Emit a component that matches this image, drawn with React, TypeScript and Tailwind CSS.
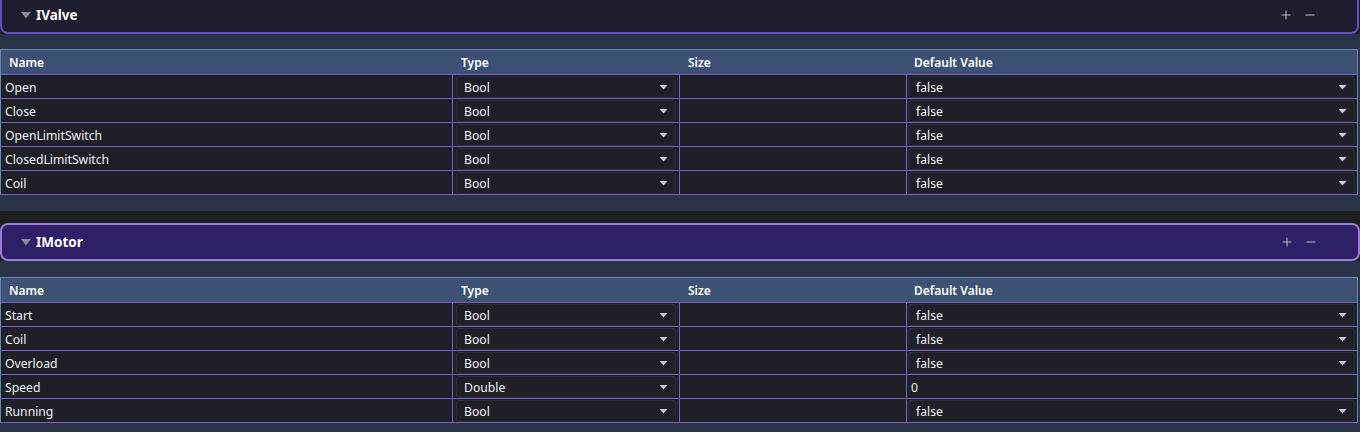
import { Minus, Plus } from "lucide-react";

type Row = { name: string; type: string; value: string; select: boolean };

const valveRows: Row[] = [
  { name: "Open", type: "Bool", value: "false", select: true },
  { name: "Close", type: "Bool", value: "false", select: true },
  { name: "OpenLimitSwitch", type: "Bool", value: "false", select: true },
  { name: "ClosedLimitSwitch", type: "Bool", value: "false", select: true },
  { name: "Coil", type: "Bool", value: "false", select: true },
];

const motorRows: Row[] = [
  { name: "Start", type: "Bool", value: "false", select: true },
  { name: "Coil", type: "Bool", value: "false", select: true },
  { name: "Overload", type: "Bool", value: "false", select: true },
  { name: "Speed", type: "Double", value: "0", select: false },
  { name: "Running", type: "Bool", value: "false", select: true },
];

function Caret() {
  return (
    <svg width="9" height="6" viewBox="0 0 9 6" className="shrink-0">
      <path d="M0.5 1h8L4.5 5.5z" fill="#c9c9cf" />
    </svg>
  );
}

function SelectBox({ value }: { value: string }) {
  return (
    <div className="flex h-full items-center justify-between rounded-[3px] border border-[#2b2c34] pl-[7px] pr-[7px]">
      <span className="pt-[2px]">{value}</span>
      <Caret />
    </div>
  );
}

function PropertyTable({ rows }: { rows: Row[] }) {
  return (
    <div className="mr-[2px] border-x border-t border-[#6289b4] text-[12.2px] text-[#eef0f6]">
      <div className="grid h-[25px] grid-cols-[452px_227px_227px_1fr] items-center border-b border-[#7a5cc6] bg-[#3c5174] pt-[2px] text-[12px] font-semibold text-white">
        <div className="pl-[8px]">Name</div>
        <div className="pl-[8px]">Type</div>
        <div className="pl-[8px]">Size</div>
        <div className="pl-[7px]">Default Value</div>
      </div>
      {rows.map((r, i) => (
        <div
          key={i}
          className="grid h-[24px] grid-cols-[452px_227px_227px_1fr] border-b border-[#7a5cc6] bg-[#1f2027]"
        >
          <div className="flex items-center border-r border-[#7a5cc6] pl-[4px] pt-[2px]">{r.name}</div>
          <div className="border-r border-[#7a5cc6] px-[3px] py-[1px]">
            <SelectBox value={r.type} />
          </div>
          <div className="border-r border-[#7a5cc6]" />
          {r.select ? (
            <div className="py-[1px] pl-[1px] pr-[2px]">
              <SelectBox value={r.value} />
            </div>
          ) : (
            <div className="flex items-center pl-[4px] pt-[2px]">{r.value}</div>
          )}
        </div>
      ))}
    </div>
  );
}

function HeaderControls() {
  return (
    <div className="flex items-center gap-[10px] pr-[40px] text-[#b8b8c4]">
      <Plus size={14} strokeWidth={1.8} />
      <Minus size={14} strokeWidth={1.8} />
    </div>
  );
}

function Title({ label }: { label: string }) {
  return (
    <div className="flex items-center gap-[5px] pl-[19px]">
      <svg width="10" height="7" viewBox="0 0 10 7">
        <path d="M0 0h10L5 6.5z" fill="#8a8a94" />
      </svg>
      <span className="text-[13.5px] font-bold text-white">{label}</span>
    </div>
  );
}

export default function App() {
  return (
    <div className="h-[432px] w-[1360px] overflow-hidden bg-[#1e1e1e] font-['Noto_Sans',sans-serif]">
      {/* IValve, header scrolled partly out of view */}
      <div className="mr-[1px] flex h-[34px] items-center justify-between rounded-b-[8px] border-x-2 border-b-2 border-[#6150c4] bg-[#1f1e2e] pb-[2px]">
        <Title label="IValve" />
        <HeaderControls />
      </div>
      <div className="bg-[#2a3347] pb-[16px] pt-[15px]">
        <PropertyTable rows={valveRows} />
      </div>

      <div className="h-[12px]" />

      {/* IMotor, expanded and selected */}
      <div className="flex h-[38px] items-center justify-between rounded-[8px] border-2 border-[#9a7ce0] bg-[#2e1f66]">
        <Title label="IMotor" />
        <HeaderControls />
      </div>
      <div className="bg-[#2a3347] pb-[16px] pt-[16px]">
        <PropertyTable rows={motorRows} />
      </div>
    </div>
  );
}
